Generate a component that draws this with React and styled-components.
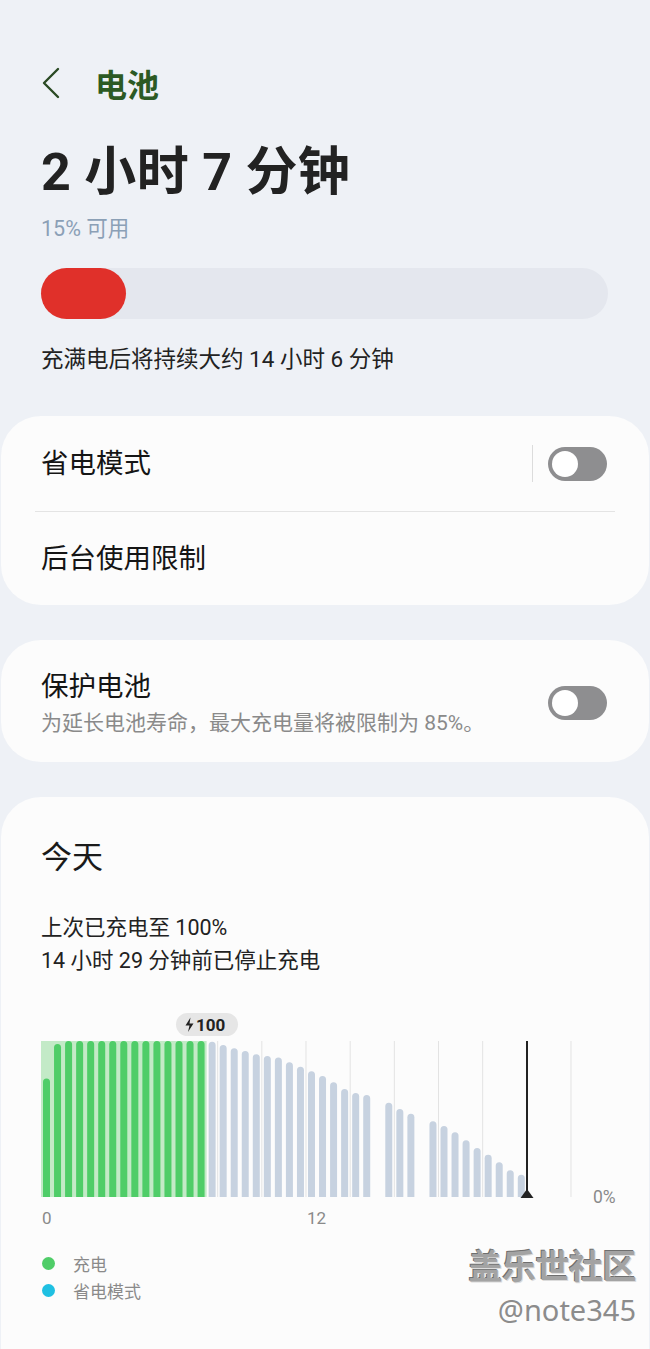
import React from 'react';
import styled, { createGlobalStyle } from 'styled-components';

const GlobalStyle = createGlobalStyle`
  body {
    margin: 0;
    background: #eef1f6;
    font-family: Roboto, "Noto Sans CJK SC", sans-serif;
    color: #1c1c1c;
  }
`;

const Page = styled.div`
  min-height: 100vh;
  display: flex;
  flex-direction: column;
`;

const Top = styled.div`
  padding: 63px 42px 0 41px;
  display: flex;
  flex-direction: column;
`;

const Header = styled.div`
  height: 40px;
  display: flex;
  align-items: center;
  gap: 34px;
`;

const HeaderTitle = styled.h1`
  margin: 0;
  font-size: 32px;
  font-weight: 700;
  color: #2c5a24;
  line-height: 40px;
  font-family: "Noto Sans CJK SC", sans-serif;
`;

const BigTime = styled.div`
  margin-top: 44px;
  font-size: 52px;
  font-weight: 700;
  line-height: 52px;
  letter-spacing: 0.3px;
  color: #222;
`;

const Available = styled.div`
  margin-top: 18px;
  font-size: 21.5px;
  line-height: 24px;
  color: #8ba0b6;
`;

const Track = styled.div`
  margin-top: 27px;
  height: 51px;
  border-radius: 26px;
  background: #e4e7ee;
  display: flex;
`;

const Fill = styled.div`
  height: 100%;
  border-radius: 26px;
  background: #e0302a;
`;

const Estimate = styled.div`
  margin-top: 27px;
  font-size: 22.5px;
  line-height: 26px;
  color: #222;
`;

const Card = styled.section`
  margin: ${(p) => p.$gap}px 1px 0;
  background: #fcfcfc;
  border-radius: 40px;
  display: flex;
  flex-direction: column;
  ${(p) => p.$grow && 'flex: 1; border-radius: 40px 40px 0 0;'}
`;

const Row = styled.div`
  height: ${(p) => p.$h}px;
  padding: 0 42px 0 40px;
  display: flex;
  align-items: center;
`;

const RowLabel = styled.div`
  flex: 1;
  font-size: 27.5px;
  line-height: 34px;
  color: #151515;
`;

const Divider = styled.div`
  height: 1px;
  margin: 0 34px;
  background: #e4e4e4;
`;

const VRule = styled.div`
  width: 1px;
  height: 37px;
  background: #dcdcdc;
  margin-right: 15px;
`;

const Toggle = styled.div`
  width: 59px;
  height: 34px;
  box-sizing: border-box;
  padding: 4px;
  border-radius: 17px;
  background: #8e8e90;
  display: flex;
  align-items: center;
`;

const Knob = styled.div`
  width: 26px;
  height: 26px;
  border-radius: 50%;
  background: #fff;
`;

const ProtectBody = styled.div`
  padding: 30px 42px 26px 40px;
  display: flex;
  align-items: center;
`;

const TextCol = styled.div`
  flex: 1;
  display: flex;
  flex-direction: column;
  gap: 6px;
`;

const SubText = styled.div`
  font-size: 21px;
  line-height: 26px;
  color: #8a8a8a;
`;

const TodayBody = styled.div`
  padding: 41px 13px 30px 40px;
  display: flex;
  flex-direction: column;
`;

const TodayTitle = styled.div`
  font-size: 31px;
  line-height: 40px;
  color: #1a1a1a;
`;

const Info = styled.div`
  margin-top: 33px;
  font-size: 21.5px;
  line-height: 33px;
  color: #222;
`;

const Chart = styled.svg`
  display: block;
  margin-top: 28px;
`;

const Bottom = styled.div`
  margin-top: 20px;
  display: flex;
  justify-content: space-between;
  align-items: flex-start;
`;

const Legend = styled.div`
  display: flex;
  flex-direction: column;
`;

const LegendItem = styled.div`
  height: 27px;
  display: flex;
  align-items: center;
  gap: 18px;
  padding-left: 1px;
  font-size: 17px;
  color: #8a8a8a;
`;

const Dot = styled.span`
  width: 13px;
  height: 13px;
  border-radius: 50%;
  background: ${(p) => p.$color};
`;

const Watermark = styled.div`
  display: flex;
  flex-direction: column;
  align-items: flex-end;
  margin-top: -3px;
`;

const MarkTitle = styled.div`
  font-size: 34px;
  line-height: 40px;
  font-weight: 700;
  color: #a3a3a3;
  letter-spacing: -0.5px;
  text-shadow: 1px 1px 0 #dcdcdc, -1px -1px 0 #6f6f6f;
`;

const MarkHandle = styled.div`
  margin-top: 6px;
  font-size: 29px;
  line-height: 34px;
  font-family: "Noto Sans", sans-serif;
  color: #8c8c8c;
`;

// heights in % of full scale, one bar per half hour (48 slots)
const bars = [
  76, 98, 100, 100, 100, 100, 100, 100, 100, 100, 100, 100, 100, 100, 100,
  99.5, 97.4, 95.3, 93.6, 91.5, 90.4, 89.5, 86.3, 83.5, 80.6, 77.6, 73.5, 69.2,
  66.7, 65.4, 0, 60.4, 56.4, 53.4, 0, 48.5, 45.5, 41.5, 36.3, 31.4, 27.1, 22.2,
  17.1, 14.3,
];

const SLOT = 530 / 48;
const TOP = 36;
const H = 156;
const BOTTOM = TOP + H;

const UsageChart = () => (
  <Chart width="590" height="225" viewBox="0 0 590 225">
    {Array.from({ length: 13 }, (_, k) => (
      <line key={k} x1={k * SLOT * 4} x2={k * SLOT * 4} y1={TOP} y2={BOTTOM} stroke="#e3e3e3" strokeWidth="1" />
    ))}
    <rect x="0" y={TOP} width={SLOT * 15} height={H} fill="#c3eac7" />
    {bars.map((v, i) => {
      if (!v) return null;
      const h = (H * v) / 100;
      const x = i * SLOT + 2;
      return (
        <path
          key={i}
          d={`M${x} ${BOTTOM} V${BOTTOM - h + 3.5} a3.5 3.5 0 0 1 7 0 V${BOTTOM} Z`}
          fill={i < 15 ? '#4fcd68' : '#c7d2e0'}
        />
      );
    })}
    <line x1="486" x2="486" y1={TOP} y2={BOTTOM} stroke="#222" strokeWidth="2" />
    <polygon points="479.5,193 492.5,193 486,184" fill="#222" />
    <rect x="135" y="8" width="62" height="23" rx="11.5" fill="#e6e6e6" />
    <path d="M149.5 12.5 L144.5 20.5 H148.5 L147 27 L152.5 18.5 H148.5 Z" fill="#222" />
    <text x="155" y="26" fontSize="17" fontWeight="700" fill="#222" fontFamily="Roboto, sans-serif">100</text>
    <text x="1" y="219" fontSize="17" fill="#8a8a8a" fontFamily="Roboto, sans-serif">0</text>
    <text x="266" y="219" fontSize="17" fill="#8a8a8a" fontFamily="Roboto, sans-serif">12</text>
    <text x="552" y="198" fontSize="17.5" fill="#8a8a8a" fontFamily="Roboto, sans-serif">0%</text>
  </Chart>
);

const BackIcon = () => (
  <svg width="20" height="34" viewBox="0 0 20 34">
    <polyline points="17,3 3,17 17,31" fill="none" stroke="#2a4a24" strokeWidth="2.4" strokeLinecap="round" strokeLinejoin="round" />
  </svg>
);

const App = () => (
  <Page>
    <GlobalStyle />
    <Top>
      <Header>
        <BackIcon />
        <HeaderTitle>电池</HeaderTitle>
      </Header>
      <BigTime>2 小时 7 分钟</BigTime>
      <Available>15% 可用</Available>
      <Track>
        <Fill style={{ width: '15%' }} />
      </Track>
      <Estimate>充满电后将持续大约 14 小时 6 分钟</Estimate>
    </Top>

    <Card $gap={44}>
      <Row $h={95}>
        <RowLabel>省电模式</RowLabel>
        <VRule />
        <Toggle>
          <Knob />
        </Toggle>
      </Row>
      <Divider />
      <Row $h={93}>
        <RowLabel>后台使用限制</RowLabel>
      </Row>
    </Card>

    <Card $gap={35}>
      <ProtectBody>
        <TextCol>
          <RowLabel>保护电池</RowLabel>
          <SubText>为延长电池寿命，最大充电量将被限制为 85%。</SubText>
        </TextCol>
        <Toggle>
          <Knob />
        </Toggle>
      </ProtectBody>
    </Card>

    <Card $gap={35} $grow>
      <TodayBody>
        <TodayTitle>今天</TodayTitle>
        <Info>
          上次已充电至 100%
          <br />
          14 小时 29 分钟前已停止充电
        </Info>
        <UsageChart />
        <Bottom>
          <Legend>
            <LegendItem>
              <Dot $color="#4fcd68" />
              充电
            </LegendItem>
            <LegendItem>
              <Dot $color="#1fc0e2" />
              省电模式
            </LegendItem>
          </Legend>
          <Watermark>
            <MarkTitle>盖乐世社区</MarkTitle>
            <MarkHandle>@note345</MarkHandle>
          </Watermark>
        </Bottom>
      </TodayBody>
    </Card>
  </Page>
);

export default App;
